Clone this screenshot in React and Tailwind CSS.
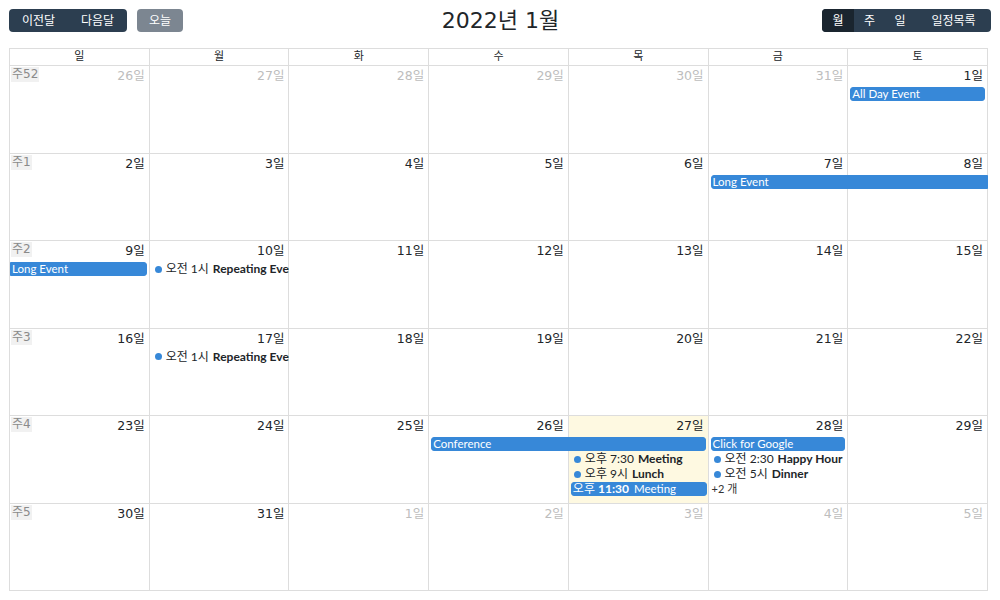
import React from 'react';

const KR = { fontFamily: '"DejaVu Sans", "Noto Sans CJK KR", sans-serif' };
const EV = { fontFamily: 'Lato, "Noto Sans CJK KR", sans-serif' };

const weeks = [
  { wk: '주52', days: [[26, 1], [27, 1], [28, 1], [29, 1], [30, 1], [31, 1], [1, 0]] },
  { wk: '주1', days: [[2, 0], [3, 0], [4, 0], [5, 0], [6, 0], [7, 0], [8, 0]] },
  { wk: '주2', days: [[9, 0], [10, 0], [11, 0], [12, 0], [13, 0], [14, 0], [15, 0]] },
  { wk: '주3', days: [[16, 0], [17, 0], [18, 0], [19, 0], [20, 0], [21, 0], [22, 0]] },
  { wk: '주4', days: [[23, 0], [24, 0], [25, 0], [26, 0], [27, 0], [28, 0], [29, 0]] },
  { wk: '주5', days: [[30, 0], [31, 0], [1, 1], [2, 1], [3, 1], [4, 1], [5, 1]] },
];

const colStart = ['col-start-1', 'col-start-2', 'col-start-3', 'col-start-4', 'col-start-5', 'col-start-6', 'col-start-7'];
const rowStart = ['row-start-1', 'row-start-2', 'row-start-3', 'row-start-4', 'row-start-5'];
const colSpan = ['col-span-1', 'col-span-1', 'col-span-2', 'col-span-3'];

// events per week: col (1-7), span, row (1-based event row)
const events = {
  0: [{ type: 'bar', col: 7, span: 1, row: 1, title: 'All Day Event' }],
  1: [{ type: 'bar', col: 6, span: 2, row: 1, title: 'Long Event', openEnd: true }],
  2: [
    { type: 'bar', col: 1, span: 1, row: 1, title: 'Long Event', openStart: true },
    { type: 'dot', col: 2, row: 1, time: '오전 1시', title: 'Repeating Event' },
  ],
  3: [{ type: 'dot', col: 2, row: 1, time: '오전 1시', title: 'Repeating Event' }],
  4: [
    { type: 'bar', col: 4, span: 2, row: 1, title: 'Conference' },
    { type: 'bar', col: 6, span: 1, row: 1, title: 'Click for Google' },
    { type: 'dot', col: 5, row: 2, time: '오후 7:30', title: 'Meeting' },
    { type: 'dot', col: 5, row: 3, time: '오후 9시', title: 'Lunch' },
    { type: 'timed', col: 5, row: 4, time: '오후', bold: '11:30', title: 'Meeting' },
    { type: 'dot', col: 6, row: 2, time: '오전 2:30', title: 'Happy Hour' },
    { type: 'dot', col: 6, row: 3, time: '오전 5시', title: 'Dinner' },
    { type: 'more', col: 6, row: 4, title: '+2 개' },
  ],
};

const Event = ({ ev }) => {
  const place = `${colStart[ev.col - 1]} ${rowStart[ev.row]} ${colSpan[ev.span || 1]}`;
  if (ev.type === 'bar') {
    return (
      <div
        style={EV}
        className={`${place} z-10 h-[14px] self-start bg-[#3788d8] border border-[#3788d8] text-white text-[11.5px] leading-[12px] px-[1px] whitespace-nowrap overflow-hidden
          ${ev.openStart ? 'ml-0 rounded-l-none' : 'ml-[2px] rounded-l-[3px]'}
          ${ev.openEnd ? 'mr-0 rounded-r-none' : 'mr-[3px] rounded-r-[3px]'}`}
      >
        {ev.title}
      </div>
    );
  }
  if (ev.type === 'timed') {
    return (
      <div
        style={EV}
        className={`${place} z-10 h-[14px] self-start mx-[2px] bg-[#3788d8] border border-[#3788d8] rounded-[3px] text-white text-[12px] leading-[12px] px-[1px] whitespace-nowrap overflow-hidden`}
      >
        {ev.time} <span className="font-bold">{ev.bold}</span>
        <span className="ml-[5px] text-[11.5px]">{ev.title}</span>
      </div>
    );
  }
  if (ev.type === 'more') {
    return (
      <div style={EV} className={`${place} z-10 self-start ml-[3px] text-[11px] leading-[14px] text-[#333]`}>
        {ev.title}
      </div>
    );
  }
  return (
    <div
      style={EV}
      className={`${place} z-10 h-[14px] self-start flex items-center px-[2px] text-[12px] text-[#212529] whitespace-nowrap overflow-hidden`}
    >
      <span className="mx-[3px] w-[7px] h-[7px] rounded-full bg-[#3788d8] shrink-0" />
      <span className="ml-[1px]">{ev.time}</span>
      <span className="ml-[4px] font-bold">{ev.title}</span>
    </div>
  );
};

const Btn = ({ children, className = '' }) => (
  <button className={`h-[23px] px-[10px] text-[12px] text-white ${className}`} style={KR}>
    {children}
  </button>
);

export default function App() {
  return (
    <div className="w-[1000px] h-[600px] bg-white px-[9px] pt-[9px]">
      <div className="flex items-center justify-between h-[23px]">
        <div className="flex items-center gap-[10px]">
          <div className="flex rounded-[4px] overflow-hidden bg-[#2c3e50]">
            <Btn className="w-[59px]">이전달</Btn>
            <Btn className="w-[59px]">다음달</Btn>
          </div>
          <Btn className="w-[46px] rounded-[4px] bg-[#7c8691]">오늘</Btn>
        </div>
        <h2 className="text-[22px] text-[#212529] -translate-x-[2px]" style={KR}>2022년 1월</h2>
        <div className="flex rounded-[4px] overflow-hidden bg-[#2c3e50]">
          <Btn className="w-[32px] px-0 bg-[#1a252f]">월</Btn>
          <Btn className="w-[30px] px-0">주</Btn>
          <Btn className="w-[32px] px-0">일</Btn>
          <Btn className="w-[75px] px-0">일정목록</Btn>
        </div>
      </div>

      <div className="mt-[16px] w-[979px] border-l border-t border-[#ddd]">
        <div className="grid grid-cols-7 h-[17px]">
          {['일', '월', '화', '수', '목', '금', '토'].map((d) => (
            <div
              key={d}
              style={KR}
              className="border-r border-b border-[#ddd] text-center text-[11px] leading-[16px] text-[#212529]"
            >
              {d}
            </div>
          ))}
        </div>
        {weeks.map((w, wi) => (
          <div key={wi} className="grid grid-cols-7 grid-rows-[21px_15px_15px_15px_15px_1fr] h-[87.5px]">
            {w.days.map(([n, other], di) => (
              <div
                key={di}
                className={`${colStart[di]} row-span-full border-r border-b border-[#ddd] flex justify-between items-start
                  ${wi === 4 && di === 4 ? 'bg-[#fef9e1]' : ''}`}
              >
                {di === 0 ? (
                  <span
                    style={KR}
                    className="ml-[1px] mt-[1px] px-[1px] bg-[#f1f1f1] text-[#8a8a8a] text-[12px] leading-[15px]"
                  >
                    {w.wk}
                  </span>
                ) : (
                  <span />
                )}
                <span
                  style={KR}
                  className={`pr-[4px] pt-[2px] text-[12.5px] leading-[15px] ${other ? 'text-[#bdbdbd]' : 'text-[#212529]'}`}
                >
                  {n}일
                </span>
              </div>
            ))}
            {(events[wi] || []).map((ev, ei) => (
              <Event key={ei} ev={ev} />
            ))}
          </div>
        ))}
      </div>
    </div>
  );
}
